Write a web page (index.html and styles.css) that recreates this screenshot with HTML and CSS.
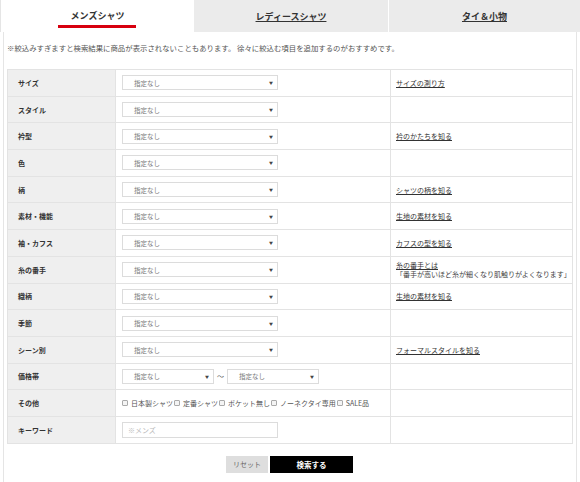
FILE: index.html
```html
<!DOCTYPE html>
<html lang="ja">
<head>
<meta charset="utf-8">
<link rel="stylesheet" href="styles.css">
</head>
<body>
<div class="wrap">
  <div class="tabs">
    <div class="tab active"><span class="tab-label">メンズシャツ</span></div>
    <div class="tab"><a class="tab-label" href="#">レディースシャツ</a></div>
    <div class="tab last"><a class="tab-label" href="#">タイ＆小物</a></div>
  </div>
  <div class="panel">
    <p class="notice">※絞込みすぎますと検索結果に商品が表示されないこともあります。 徐々に絞込む項目を追加するのがおすすめです。</p>
    <table class="search">
      <tr><th>サイズ</th><td class="sel"><div class="select">指定なし<span class="arr">▼</span></div></td><td class="link"><a href="#">サイズの測り方</a></td></tr>
      <tr><th>スタイル</th><td class="sel"><div class="select">指定なし<span class="arr">▼</span></div></td><td class="link"></td></tr>
      <tr><th>衿型</th><td class="sel"><div class="select">指定なし<span class="arr">▼</span></div></td><td class="link"><a href="#">衿のかたちを知る</a></td></tr>
      <tr><th>色</th><td class="sel"><div class="select">指定なし<span class="arr">▼</span></div></td><td class="link"></td></tr>
      <tr><th>柄</th><td class="sel"><div class="select">指定なし<span class="arr">▼</span></div></td><td class="link"><a href="#">シャツの柄を知る</a></td></tr>
      <tr><th>素材・機能</th><td class="sel"><div class="select">指定なし<span class="arr">▼</span></div></td><td class="link"><a href="#">生地の素材を知る</a></td></tr>
      <tr><th>袖・カフス</th><td class="sel"><div class="select">指定なし<span class="arr">▼</span></div></td><td class="link"><a href="#">カフスの型を知る</a></td></tr>
      <tr><th>糸の番手</th><td class="sel"><div class="select">指定なし<span class="arr">▼</span></div></td><td class="link two"><a href="#">糸の番手とは</a><br>「番手が高いほど糸が細くなり肌触りがよくなります」</td></tr>
      <tr><th>織柄</th><td class="sel"><div class="select">指定なし<span class="arr">▼</span></div></td><td class="link"><a href="#">生地の素材を知る</a></td></tr>
      <tr><th>季節</th><td class="sel"><div class="select">指定なし<span class="arr">▼</span></div></td><td class="link"></td></tr>
      <tr><th>シーン別</th><td class="sel"><div class="select">指定なし<span class="arr">▼</span></div></td><td class="link"><a href="#">フォーマルスタイルを知る</a></td></tr>
      <tr><th>価格帯</th><td class="sel"><div class="range"><div class="select small">指定なし<span class="arr">▼</span></div><span class="tilde">〜</span><div class="select small">指定なし<span class="arr">▼</span></div></div></td><td class="link"></td></tr>
      <tr><th>その他</th><td class="sel"><div class="checks"><label><span class="cb"></span>日本製シャツ</label><label><span class="cb"></span>定番シャツ</label><label><span class="cb"></span>ポケット無し</label><label><span class="cb"></span>ノーネクタイ専用</label><label><span class="cb"></span>SALE品</label></div></td><td class="link"></td></tr>
      <tr><th>キーワード</th><td class="sel"><div class="input">※メンズ</div></td><td class="link"></td></tr>
    </table>
    <div class="buttons">
      <button class="btn reset">リセット</button>
      <button class="btn submit">検索する</button>
    </div>
  </div>
</div>
</body>
</html>
```
FILE: styles.css
```css
html, body {
  margin: 0;
  padding: 0;
  background: #fff;
}
body {
  font-family: "Noto Sans CJK JP", "Noto Sans", sans-serif;
  color: #333;
  width: 580px;
  height: 482px;
  overflow: hidden;
}
.wrap {
  width: 580px;
}
.tabs {
  display: flex;
  height: 32px;
}
.tab {
  width: 194px;
  background: #ebebeb;
  display: flex;
  align-items: center;
  justify-content: center;
  box-sizing: border-box;
}
.tab.last {
  width: 192px;
  border-left: 1px solid #fff;
}
.tab.active {
  background: #fff;
  border-left: 1px solid #e5e5e5;
  position: relative;
}
.tab-label {
  font-size: 9px;
  font-weight: bold;
  color: #333;
  text-decoration: underline;
  line-height: 1;
}
.tab.active .tab-label {
  text-decoration: none;
  margin-top: -1px;
}
.tab.active::after {
  content: "";
  position: absolute;
  left: 57px;
  width: 78px;
  top: 25px;
  height: 3px;
  background: #d7000f;
}
.panel {
  margin: 0 3px 0 3px;
  border: 1px solid #e5e5e5;
  border-top: none;
  padding: 0 4px 12px 3px;
}
.notice {
  margin: 0;
  padding-top: 11px;
  height: 26px;
  font-size: 7.4px;
  line-height: 10px;
  color: #555;
}
.search {
  width: 566px;
  border-collapse: collapse;
  table-layout: fixed;
}
.search th, .search td {
  border: 1px solid #e3e3e3;
  height: 25.7px;
  padding: 0;
  font-size: 7px;
  vertical-align: middle;
}
.search th {
  width: 97px;
  background: #efefef;
  text-align: left;
  padding-left: 10px;
  font-weight: bold;
  color: #333;
}
.search td.sel {
  width: 268px;
  padding-left: 6px;
}
.search td.link {
  padding-left: 5px;
  color: #444;
}
.search td.link a {
  color: #333;
  text-decoration: underline;
}
.search td.two {
  line-height: 9px;
}
.select {
  width: 156px;
  height: 15px;
  box-sizing: border-box;
  border: 1px solid #dcdcdc;
  background: #fff;
  font-size: 6.5px;
  color: #777;
  padding-left: 11px;
  display: flex;
  align-items: center;
  position: relative;
}
.select .arr {
  position: absolute;
  right: 4px;
  top: 4px;
  font-size: 4px;
  color: #444;
}
.select.small {
  width: 92px;
}
.range {
  display: flex;
  align-items: center;
}
.tilde {
  font-size: 7px;
  color: #555;
  width: 13px;
  text-align: center;
}
.checks {
  display: flex;
  align-items: center;
  font-size: 7px;
  color: #555;
}
.checks label {
  display: flex;
  align-items: center;
  margin-right: 1px;
}
.cb {
  width: 6px;
  height: 6px;
  border: 1px solid #aaa;
  background: #f4f4f4;
  border-radius: 1px;
  margin-right: 3px;
  box-sizing: border-box;
}
.input {
  width: 156px;
  height: 16px;
  box-sizing: border-box;
  border: 1px solid #dcdcdc;
  font-size: 7px;
  color: #bbb;
  padding-left: 5px;
  display: flex;
  align-items: center;
}
.buttons {
  display: flex;
  justify-content: center;
  gap: 2px;
  margin-top: 12px;
}
.btn {
  font-family: "Noto Sans CJK JP", sans-serif;
  border: none;
  height: 17px;
  padding: 0;
  font-size: 7px;
}
.reset {
  width: 42px;
  background: #dedede;
  color: #666;
}
.submit {
  width: 83px;
  background: #000;
  color: #fff;
  font-weight: bold;
  font-size: 7.5px;
}
```
